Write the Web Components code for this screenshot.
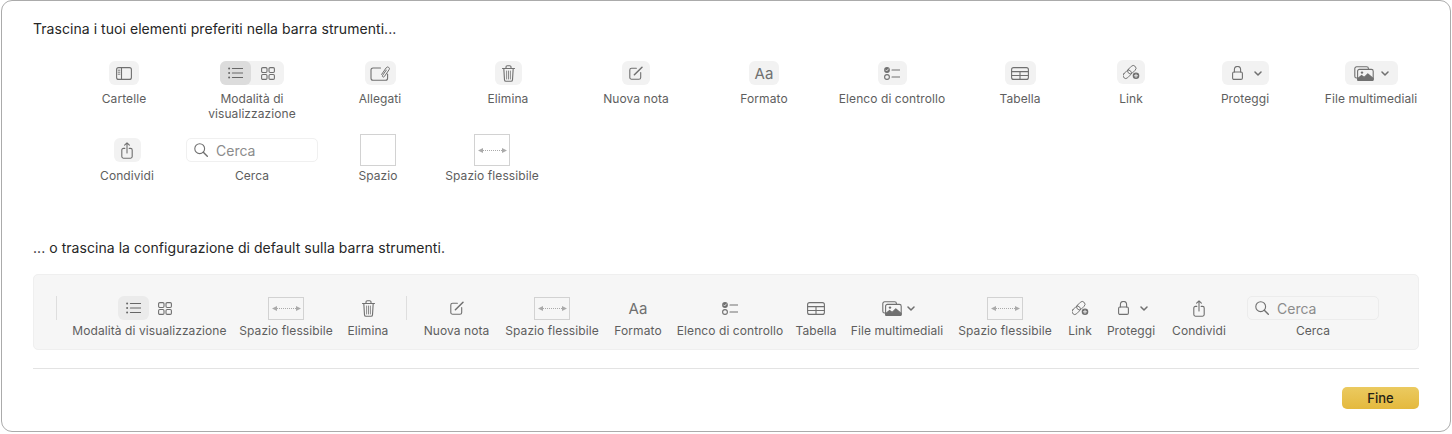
<!DOCTYPE html>
<html lang="it">
<head>
<meta charset="utf-8">
<title>Personalizza barra strumenti</title>
<style>
  html, body { margin: 0; padding: 0; background: #fff; }
  body { font-family: Inter, "Liberation Sans", sans-serif; }
</style>
</head>
<body>
<toolbar-sheet>
  <span slot="top-title">Trascina i tuoi elementi preferiti nella barra strumenti...</span>

  <palette-row slot="palette" start="27">
    <tool-item w="128" label="Cartelle"><tool-well w="30"><tb-icon name="sidebar"></tb-icon></tool-well></tool-item>
    <tool-item w="128" wrap label="Modalità di visualizzazione"><view-switch></view-switch></tool-item>
    <tool-item w="128" label="Allegati"><tool-well w="31"><tb-icon name="attach"></tb-icon></tool-well></tool-item>
    <tool-item w="128" label="Elimina"><tool-well w="27"><tb-icon name="trash"></tb-icon></tool-well></tool-item>
    <tool-item w="128" label="Nuova nota"><tool-well w="28"><tb-icon name="compose"></tb-icon></tool-well></tool-item>
    <tool-item w="128" label="Formato"><tool-well w="30"><span style="font:15px/1 Inter,'Liberation Sans',sans-serif;color:#707070">Aa</span></tool-well></tool-item>
    <tool-item w="128" label="Elenco di controllo"><tool-well w="29"><tb-icon name="check"></tb-icon></tool-well></tool-item>
    <tool-item w="128" label="Tabella"><tool-well w="31"><tb-icon name="table"></tb-icon></tool-well></tool-item>
    <tool-item w="94" label="Link"><tool-well w="28" lift="1"><tb-icon name="link"></tb-icon></tool-well></tool-item>
    <tool-item w="134" label="Proteggi"><tool-well w="47" gap="11" nudge="4"><tb-icon name="lock"></tb-icon><tb-icon name="chev"></tb-icon></tool-well></tool-item>
    <tool-item w="118" label="File multimediali"><tool-well w="53" gap="7"><tb-icon name="media"></tb-icon><tb-icon name="chev"></tb-icon></tool-well></tool-item>
  </palette-row>

  <palette-row slot="palette" start="34" style="margin-top:13px">
    <tool-item w="120" label="Condividi"><tool-well w="27"><tb-icon name="share"></tb-icon></tool-well></tool-item>
    <tool-item w="130" label="Cerca"><search-field></search-field></tool-item>
    <tool-item w="122" label="Spazio"><space-box></space-box></tool-item>
    <tool-item w="106" label="Spazio flessibile"><space-box flex></space-box></tool-item>
  </palette-row>

  <span slot="bottom-title">... o trascina la configurazione di default sulla barra strumenti.</span>

  <default-bar slot="bar">
    <bar-sep></bar-sep>
    <tool-item w="167" slim label="Modalità di visualizzazione"><view-switch></view-switch></tool-item>
    <tool-item w="106" slim label="Spazio flessibile"><space-box flex></space-box></tool-item>
    <tool-item w="58" slim label="Elimina"><tool-well w="27"><tb-icon name="trash"></tb-icon></tool-well></tool-item>
    <bar-sep></bar-sep>
    <tool-item w="81" slim label="Nuova nota"><tool-well w="28"><tb-icon name="compose"></tb-icon></tool-well></tool-item>
    <tool-item w="110" slim label="Spazio flessibile"><space-box flex></space-box></tool-item>
    <tool-item w="62" slim label="Formato"><tool-well w="30"><span style="font:15px/1 Inter,'Liberation Sans',sans-serif;color:#707070">Aa</span></tool-well></tool-item>
    <tool-item w="122" slim label="Elenco di controllo"><tool-well w="29"><tb-icon name="check"></tb-icon></tool-well></tool-item>
    <tool-item w="50" slim label="Tabella"><tool-well w="31"><tb-icon name="table"></tb-icon></tool-well></tool-item>
    <tool-item w="112" slim label="File multimediali"><tool-well w="53" gap="5" nudge="3"><tb-icon name="media"></tb-icon><tb-icon name="chev"></tb-icon></tool-well></tool-item>
    <tool-item w="104" slim label="Spazio flessibile"><space-box flex></space-box></tool-item>
    <tool-item w="46" slim label="Link"><tool-well w="28"><tb-icon name="link"></tb-icon></tool-well></tool-item>
    <tool-item w="56" slim label="Proteggi"><tool-well w="47" gap="11" nudge="4"><tb-icon name="lock"></tb-icon><tb-icon name="chev"></tb-icon></tool-well></tool-item>
    <tool-item w="80" slim label="Condividi"><tool-well w="27"><tb-icon name="share"></tb-icon></tool-well></tool-item>
    <tool-item w="148" slim label="Cerca"><search-field></search-field></tool-item>
  </default-bar>

  <done-button slot="action">Fine</done-button>
</toolbar-sheet>

<script>
// Icons, all drawn at the size they have on screen.
const ICONS = {
  sidebar: [16, 13, `<rect x=".6" y=".6" width="14.8" height="11.8" rx="2"/><path d="M5.5.6v11.8"/><path d="M2.1 3.2h1.8M2.1 5.2h1.8M2.1 7.2h1.8" stroke-width=".9"/>`],
  attach: [20, 16, `<path d="M10.5 3H3a2 2 0 0 0-2 2v8.2a2 2 0 0 0 2 2h12.6a2 2 0 0 0 2-2V9"/><path d="M11.6 9.4l4.6-6.6a1.7 1.7 0 0 1 2.9 1.9l-4.8 6.9a1 1 0 0 1-1.7-1.2l3.7-5.3" stroke-width="1"/>`],
  trash: [13, 17, `<path d="M.5 3.5h12M4 3.5V2.1A1.3 1.3 0 0 1 5.3.8h2.4A1.3 1.3 0 0 1 9 2.1v1.4"/><path d="M1.8 3.5l.7 11.4a1.5 1.5 0 0 0 1.5 1.4h5a1.5 1.5 0 0 0 1.5-1.4l.7-11.4"/><path d="M4.6 6v8M6.5 6v8M8.4 6v8" stroke-width=".8"/>`],
  compose: [14, 14, `<path d="M7.4 2.3H2.6A1.8 1.8 0 0 0 .8 4.1v7.3a1.8 1.8 0 0 0 1.8 1.8h7.3a1.8 1.8 0 0 0 1.8-1.8V6.6"/><path d="M5.4 8.8L13 1.2" stroke-width="1.5"/>`],
  check: [16, 13, `<circle cx="3" cy="3" r="2.9" fill="#707070" stroke="none"/><path d="M1.7 3l1 1 1.6-2" stroke="#f2f2f2" stroke-width=".8"/><circle cx="3" cy="10" r="2.4"/><path d="M8 3h8M8 10h8"/>`],
  table: [18, 13, `<rect x=".6" y=".6" width="16.8" height="11.8" rx="2"/><path d="M.6 4.6h16.8M.6 8.5h16.8M9 4.6v7.8"/>`],
  link: [17, 16, `<g transform="rotate(-45 6.5 8)" stroke-width=".9"><rect x="-1.5" y="5.25" width="9.5" height="5.5" rx="2.75"/><rect x="5" y="5.25" width="9.5" height="5.5" rx="2.75"/></g><circle cx="13" cy="11.8" r="3.3" fill="#707070" stroke="none"/><path d="M13 10.2v3.2M11.4 11.8h3.2" stroke="#f2f2f2" stroke-width=".9"/>`],
  lock: [11, 14, `<rect x=".6" y="6" width="9.8" height="7.4" rx="1.4"/><path d="M2.4 6V3.6a3.1 3.1 0 0 1 6.2 0V6"/>`],
  chev: [8, 5, `<path d="M1 1l3 3 3-3" stroke-width="1.5"/>`],
  media: [20, 15, `<path d="M3.6 12H2.6A1.8 1.8 0 0 1 .8 10.2V2.6A1.8 1.8 0 0 1 2.6.8h10A1.8 1.8 0 0 1 14.4 2.6v.7"/><rect x="3.6" y="3.4" width="15.6" height="11" rx="1.8"/><path d="M3.6 12.6l4-3.2 2.6 2 3.6-3.6 5.4 4.6v1a1.8 1.8 0 0 1-1.8 1.8H5.4a1.8 1.8 0 0 1-1.8-1.8z" fill="#707070"/><circle cx="8" cy="6.6" r="1.2" fill="#707070" stroke="none"/>`],
  share: [12, 17, `<path d="M3.8 6.4H2.4A1.6 1.6 0 0 0 .8 8v6.6a1.6 1.6 0 0 0 1.6 1.6h7.2a1.6 1.6 0 0 0 1.6-1.6V8a1.6 1.6 0 0 0-1.6-1.6H8.2"/><path d="M6 11V.9M3.6 3.2L6 .8l2.4 2.4"/>`],
  search: [14, 14, `<circle cx="5.7" cy="5.7" r="4.9"/><path d="M9.3 9.3l4 4" stroke-width="1.4"/>`],
  list: [15, 12, `<g fill="#666" stroke="none"><circle cx="1.1" cy="1.5" r="1"/><circle cx="1.1" cy="6" r="1"/><circle cx="1.1" cy="10.5" r="1"/></g><path d="M4.4 1.5h10.4M4.4 6h10.4M4.4 10.5h10.4" stroke="#666"/>`],
  grid: [14, 13, `<rect x=".6" y=".6" width="5.4" height="4.9" rx="1.2"/><rect x="8" y=".6" width="5.4" height="4.9" rx="1.2"/><rect x="8" y="7.5" width="5.4" height="4.9" rx="1.2"/><rect x=".6" y="7.5" width="5.4" height="4.9" rx="1.2"/>`]
};

class TbIcon extends HTMLElement {
  connectedCallback() {
    const [w, h, body] = ICONS[this.getAttribute('name')];
    this.attachShadow({ mode: 'open' }).innerHTML = `
      <style>:host { display: block; line-height: 0; }</style>
      <svg width="${w}" height="${h}" viewBox="0 0 ${w} ${h}" fill="none" stroke="#707070" stroke-width="1.1" stroke-linecap="round" stroke-linejoin="round">${body}</svg>`;
  }
}

class ToolWell extends HTMLElement {
  connectedCallback() {
    const w = this.getAttribute('w');
    const gap = this.getAttribute('gap') || 0;
    const nudge = this.getAttribute('nudge') || 0;
    const lift = this.getAttribute('lift') || 0;
    this.attachShadow({ mode: 'open' }).innerHTML = `
      <style>
        :host {
          display: flex;
          align-items: center;
          justify-content: center;
          box-sizing: border-box;
          width: ${w}px;
          height: 24px;
          margin-bottom: ${lift * 2}px;
          gap: ${gap}px;
          padding-left: ${nudge}px;
          border-radius: 6px;
          background: var(--well-bg, #f2f2f2);
        }
      </style>
      <slot></slot>`;
  }
}

class ViewSwitch extends HTMLElement {
  connectedCallback() {
    this.attachShadow({ mode: 'open' }).innerHTML = `
      <style>
        :host {
          display: flex;
          width: 64px;
          height: 24px;
          border-radius: 6px;
          background: var(--well-bg, #f2f2f2);
        }
        .cell { flex: 1; display: flex; align-items: center; justify-content: center; border-radius: 6px; }
        .on { flex: 0 0 31px; background: var(--well-on, #dcdcdc); }
      </style>
      <div class="cell on"><tb-icon name="list"></tb-icon></div>
      <div class="cell"><tb-icon name="grid"></tb-icon></div>`;
  }
}

class SearchField extends HTMLElement {
  connectedCallback() {
    this.attachShadow({ mode: 'open' }).innerHTML = `
      <style>
        :host {
          display: flex;
          align-items: center;
          box-sizing: border-box;
          width: 132px;
          height: 24px;
          padding-left: 7px;
          gap: 8px;
          border: 1px solid var(--field-line, #f0f0f0);
          border-radius: 5px;
          font-size: 14px;
          color: #8c8c8c;
        }
      </style>
      <tb-icon name="search"></tb-icon><span>Cerca</span>`;
  }
}

class SpaceBox extends HTMLElement {
  connectedCallback() {
    const arrows = this.hasAttribute('flex') ? `
      <svg width="29" height="7" viewBox="0 0 29 7" fill="none" stroke="#aaa">
        <path d="M5 3.5h19" stroke-dasharray="1 1"/>
        <path d="M0 3.5l5-2.5v5zM29 3.5l-5-2.5v5z" fill="#aaa" stroke="none"/>
      </svg>` : '';
    this.attachShadow({ mode: 'open' }).innerHTML = `
      <style>
        :host {
          display: flex;
          align-items: center;
          justify-content: center;
          box-sizing: border-box;
          width: 36px;
          height: var(--space-h, 32px);
          border: 1px solid #d2d2d2;
        }
      </style>${arrows}`;
  }
}

class ToolItem extends HTMLElement {
  connectedCallback() {
    const w = this.getAttribute('w');
    const slim = this.hasAttribute('slim');
    const wrap = this.hasAttribute('wrap');
    this.attachShadow({ mode: 'open' }).innerHTML = `
      <style>
        :host {
          display: flex;
          flex-direction: column;
          align-items: center;
          flex: 0 0 ${w}px;
          width: ${w}px;
          --space-h: ${slim ? 23 : 32}px;
        }
        .slot {
          display: flex;
          align-items: center;
          justify-content: center;
          height: ${slim ? 24 : 32}px;
        }
        .label {
          margin-top: ${slim ? 3 : 2}px;
          font-size: 12px;
          letter-spacing: .08px;
          line-height: 15px;
          color: #5e5e5e;
          text-align: center;
          white-space: ${wrap ? 'normal' : 'nowrap'};
        }
      </style>
      <div class="slot"><slot></slot></div>
      <div class="label">${this.getAttribute('label')}</div>`;
  }
}

class PaletteRow extends HTMLElement {
  connectedCallback() {
    this.attachShadow({ mode: 'open' }).innerHTML = `
      <style>
        :host { display: flex; align-items: flex-start; padding-left: ${this.getAttribute('start')}px; }
      </style>
      <slot></slot>`;
  }
}

class BarSep extends HTMLElement {
  connectedCallback() {
    this.attachShadow({ mode: 'open' }).innerHTML = `
      <style>
        :host { display: block; flex: 0 0 1px; height: 24px; margin: 0 9px; background: #dedede; }
        :host(:first-child) { margin-left: 0; }
      </style>`;
  }
}

class DefaultBar extends HTMLElement {
  constructor() {
    super();
    this.attachShadow({ mode: 'open' }).innerHTML = `
      <style>
        :host {
          display: flex;
          align-items: flex-start;
          box-sizing: border-box;
          height: 76px;
          padding: 21px 0 0 22px;
          border: 1px solid #efefef;
          border-radius: 5px;
          background: #f6f6f6;
          --well-bg: transparent;
          --well-on: #ebebeb;
          --field-line: #ececec;
        }
      </style>
      <slot></slot>`;
  }
}

class DoneButton extends HTMLElement {
  constructor() {
    super();
    this.attachShadow({ mode: 'open' }).innerHTML = `
      <style>
        :host {
          display: flex;
          align-items: center;
          justify-content: center;
          width: 77px;
          height: 22px;
          border-radius: 5px;
          background: linear-gradient(#ebca60, #e4b93e);
          font-size: 13px;
          font-weight: 500;
          color: #262216;
        }
      </style>
      <slot></slot>`;
  }
}

class ToolbarSheet extends HTMLElement {
  constructor() {
    super();
    this.attachShadow({ mode: 'open' }).innerHTML = `
      <style>
        :host {
          display: block;
          box-sizing: border-box;
          width: 1450px;
          height: 432px;
          margin-left: 1px;
          padding: 20px 31px 0 31px;
          border: 1px solid #ababab;
          border-radius: 11px;
          background: #fff;
        }
        .title { font-size: 14px; letter-spacing: .05px; line-height: 16px; color: #262626; }
        .palette { margin-top: 20px; }
        .second { margin-top: 57px; }
        .bar { margin-top: 18px; }
        .rule { height: 1px; margin-top: 18px; background: #e3e3e3; }
        .actions { display: flex; justify-content: flex-end; margin-top: 18px; }
      </style>
      <div class="title"><slot name="top-title"></slot></div>
      <div class="palette"><slot name="palette"></slot></div>
      <div class="title second"><slot name="bottom-title"></slot></div>
      <div class="bar"><slot name="bar"></slot></div>
      <div class="rule"></div>
      <div class="actions"><slot name="action"></slot></div>`;
  }
}

customElements.define('tb-icon', TbIcon);
customElements.define('tool-well', ToolWell);
customElements.define('view-switch', ViewSwitch);
customElements.define('search-field', SearchField);
customElements.define('space-box', SpaceBox);
customElements.define('tool-item', ToolItem);
customElements.define('palette-row', PaletteRow);
customElements.define('bar-sep', BarSep);
customElements.define('default-bar', DefaultBar);
customElements.define('done-button', DoneButton);
customElements.define('toolbar-sheet', ToolbarSheet);
</script>
</body>
</html>
